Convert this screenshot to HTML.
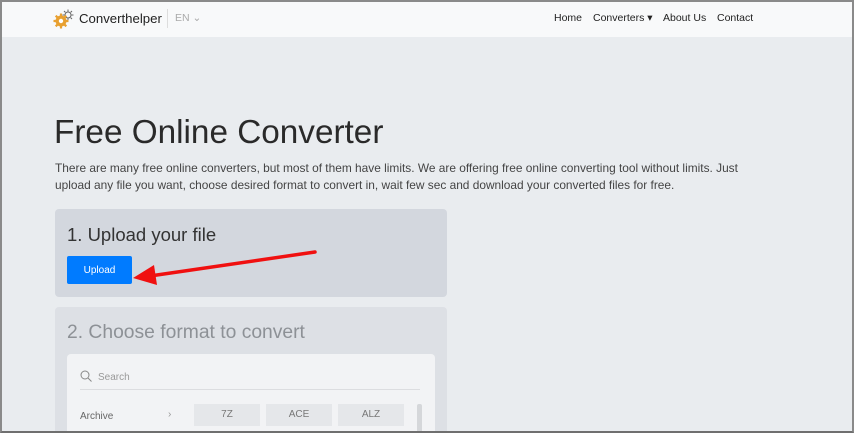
<!DOCTYPE html>
<html><head><style>
*{margin:0;padding:0;box-sizing:border-box}
html{width:854px;height:433px;overflow:hidden}
body{width:854px;height:433px;overflow:hidden;background:#e9ecef;font-family:"Liberation Sans",sans-serif;position:relative;color:#212529}
.frame{position:absolute;left:0;top:0;width:854px;height:433px;border:2px solid #8a8a8a;border-bottom:2px solid #6f6f6f;pointer-events:none;z-index:10}
.nav{position:absolute;left:0;top:0;width:854px;height:37px;background:#f8f9fa}
.nav .brand{position:absolute;left:79px;top:11px;font-size:13.2px;color:#222}
.nav .sep{position:absolute;left:167px;top:9px;width:1px;height:19px;background:#ddd}
.nav .en{position:absolute;left:175px;top:12px;font-size:10.5px;color:#aaa}
.nav .links{position:absolute;top:12px;font-size:10.5px;color:#222}
h1{position:absolute;left:54px;top:114px;font-size:33.3px;font-weight:300;color:#2a2a2a}
p.d{position:absolute;left:55px;top:160px;width:720px;font-size:11.9px;line-height:17px;color:#444}
.c1{position:absolute;left:55px;top:209px;width:392px;height:88px;background:#d3d7de;border-radius:4px}
.c1 h2{position:absolute;left:12px;top:15px;font-size:18.5px;font-weight:300;color:#333}
.btn{position:absolute;left:12px;top:47px;width:65px;height:28px;background:#007bff;border-radius:2px;color:#fff;font-size:10px;text-align:center;line-height:29px}
.c2{position:absolute;left:55px;top:307px;width:392px;height:124px;overflow:hidden;background:#dde0e5;border-radius:4px 4px 0 0}
.c2 h2{position:absolute;left:12px;top:15px;font-size:19.3px;font-weight:300;color:#8d9196}
.panel{position:absolute;left:12px;top:47px;width:368px;height:100px;background:#f2f3f5;border-radius:4px}
.srch{position:absolute;left:13px;top:16px;width:340px;height:20px;border-bottom:1px solid #dcdde0;font-size:10px;color:#999}
.tag{position:absolute;top:50px;width:66px;height:22px;background:#e5e7ea;font-size:10px;color:#777;text-align:center;line-height:22px}
</style></head><body>
<div class="nav">
<svg style="position:absolute;left:53px;top:8px" width="23" height="21" viewBox="0 0 23 21"><g fill="none" stroke="#666" stroke-width="1"><circle cx="15" cy="7" r="3"/><path d="M15 1.5v2M15 10.5v2M9.5 7h2M18.5 7h2M11 3l1.4 1.4M17.6 9.6L19 11M19 3l-1.4 1.4"/></g><circle cx="8" cy="13" r="5.5" fill="#e8a030"/><circle cx="8" cy="13" r="2.2" fill="#fff"/><g stroke="#e8a030" stroke-width="2.2"><path d="M8 5.5v3M8 17.5v3M0.5 13h3M12.5 13h3M2.7 7.7l2 2M11.3 16.3l2 2M13.3 7.7l-2 2M4.7 16.3l-2 2"/></g></svg>
<div class="brand">Converthelper</div><div class="sep"></div><div class="en">EN ⌄</div>
<div class="links" style="left:554px">Home</div>
<div class="links" style="left:593px">Converters ▾</div>
<div class="links" style="left:663px">About Us</div>
<div class="links" style="left:717px">Contact</div>
</div>
<h1>Free Online Converter</h1>
<p class="d">There are many free online converters, but most of them have limits. We are offering free online converting tool without limits. Just upload any file you want, choose desired format to convert in, wait few sec and download your converted files for free.</p>
<div class="c1"><h2>1. Upload your file</h2><div class="btn">Upload</div></div>
<div class="c2"><h2>2. Choose format to convert</h2>
<div class="panel"><div class="srch"><svg width="12" height="12" viewBox="0 0 12 12" style="vertical-align:-2px;margin-right:6px"><circle cx="5" cy="5" r="4" fill="none" stroke="#888" stroke-width="1"/><path d="M8 8l3.5 3.5" stroke="#888"/></svg>Search</div>
<div style="position:absolute;left:13px;top:57px;font-size:10px;color:#666">Archive</div>
<div style="position:absolute;left:101px;top:55px;font-size:10px;color:#999">›</div>
<div class="tag" style="left:127px">7Z</div><div class="tag" style="left:199px">ACE</div><div class="tag" style="left:271px">ALZ</div>
<div style="position:absolute;left:350px;top:50px;width:5px;height:60px;background:#d5d7da;border-radius:2px"></div>
</div></div>
<svg style="position:absolute;left:0;top:0" width="854" height="433"><line x1="315" y1="252" x2="150" y2="276" stroke="#f01010" stroke-width="3.5" stroke-linecap="round"/><polygon points="133,278 154,265 157,285" fill="#f01010"/></svg>
<div class="frame"></div>
</body></html>
